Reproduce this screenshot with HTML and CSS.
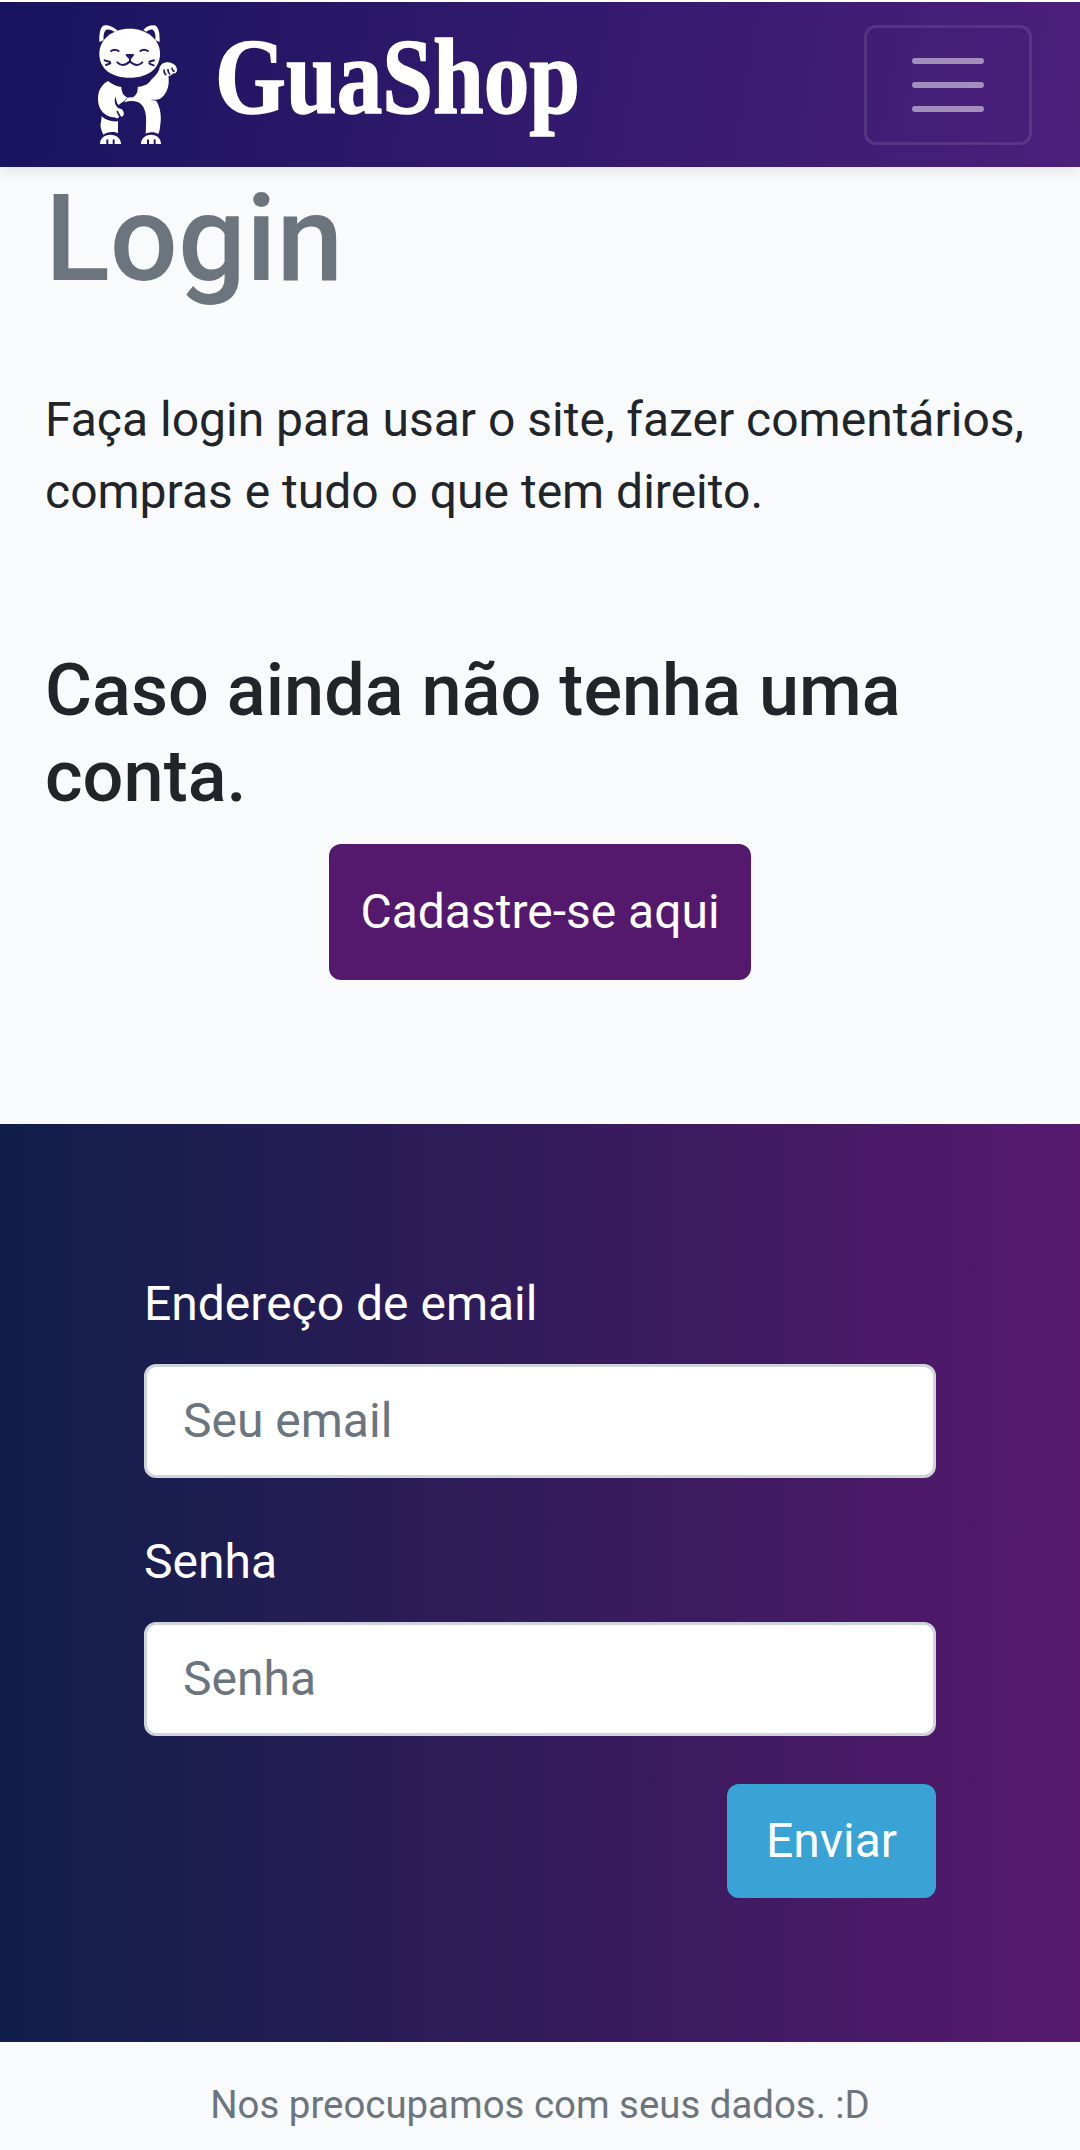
FILE: index.html
```html
<!DOCTYPE html>
<html lang="pt-BR">
<head>
<meta charset="utf-8">
<title>GuaShop - Login</title>
<link rel="stylesheet" href="styles.css">
</head>
<body>
<header class="navbar">
  <a class="brand">
    <svg class="cat" viewBox="0 0 360 435" aria-hidden="true">
      <g fill="#fff">
        <path d="M58 96C57 68 62 46 76 46C91 46 104 54 113 62L105 66C93 59 84 57 78 60C71 65 70 79 71 91Z"/>
        <path d="M239 96C240 68 235 46 221 46C207 46 197 52 190 60L199 65C208 59 214 57 219 60C226 65 227 79 226 91Z"/>
        <path d="M149 56C201 56 240 88 240 131C240 178 201 203 149 203C96 203 58 178 58 131C58 88 97 56 149 56Z"/>
        <path d="M84 213C94 222 108 229 124 231C125 247 129 256 141 262L132 274C126 276 121 282 116 285C109 279 109 271 107 260C100 273 107 289 116 295L124 297C132 303 134 311 129 319C124 321 121 319 119 316C116 328 108 326 104 322C83 322 62 308 56 284C50 255 57 228 84 213Z"/>
        <path d="M173 231C196 229 206 221 215 208C226 198 237 184 238 176C241 163 251 157 263 157C279 157 292 168 291 181C290 189 284 192 279 190C276 196 270 197 266 198C265 200 266 203 266 207C268 231 258 256 240 266C231 271 216 268 211 270C217 272 224 270 229 273C241 291 246 322 240 351C239 361 238 367 234 372C225 364 207 366 197 371C199 334 201 307 188 288C180 277 172 275 164 272L158 262C170 255 174 245 173 231Z"/>
        <path d="M141 263Q153 260 165 263L172 275Q153 270 133 277Z"/>
        <path d="M65 319C77 330 94 336 114 334V370C104 364 82 364 70 374C64 361 59 347 63 336Z"/>
        <path d="M60 402C59 386 73 374 91 374C110 374 123 386 123 402Z"/>
        <path d="M183 402C182 386 196 374 213 374C231 374 243 386 243 402Z"/>
      </g>
      <g class="ink">
        <path d="M93 123Q104 115 116 123M181 123Q192 115 204 123M112 157Q129 174 150 154Q170 174 187 157M150 145V157M74 151L90 156M78 165L91 160M208 155L222 151M208 161L221 166M82 391V402M101 391V402M204 391V402M224 391V402"/>
        <path class="claws" d="M252 180Q251 188 257 194M264 179Q264 187 269 192M276 175Q277 181 282 184M112 305L119 318"/>
        <path class="nose" d="M140 135H159L150 146Z"/>
      </g>
    </svg>
    <svg class="wordmark" viewBox="0 0 380 161">
      <text x="1" y="109" textLength="365" lengthAdjust="spacingAndGlyphs">GuaShop</text>
    </svg>
  </a>
  <button class="toggler" aria-label="Menu"><span></span><span></span><span></span></button>
</header>
<main>
  <section class="intro">
    <h1>Login</h1>
    <p>Faça login para usar o site, fazer comentários, compras e tudo o que tem direito.</p>
    <h2>Caso ainda não tenha uma conta.</h2>
    <a class="btn signup">Cadastre-se aqui</a>
  </section>
  <form class="login">
    <label for="email">Endereço de email</label>
    <input id="email" type="email" placeholder="Seu email">
    <label for="senha">Senha</label>
    <input id="senha" type="password" placeholder="Senha">
    <button class="btn send" type="button">Enviar</button>
  </form>
</main>
<footer>Nos preocupamos com seus dados. :D</footer>
</body>
</html>
```
FILE: styles.css
```css
* { box-sizing: border-box; }
body {
  margin: 0;
  padding-top: 2px;
  height: 2150px;
  overflow: hidden;
  background: #f8fafc;
  color: #212529;
  font: 400 48px/72px Roboto, sans-serif;
}
h1, h2, p { margin: 0; }
.navbar {
  display: flex;
  align-items: center;
  justify-content: space-between;
  height: 165px;
  padding: 0 48px 0 80px;
  background: linear-gradient(100deg, #18145f, #4c1f7b);
  box-shadow: 0 -2px #fff, 0 6px 12px rgba(0, 0, 0, .075);
}
.brand { display: flex; align-items: center; }
.cat { width: 120px; height: 145px; margin-bottom: 4px; }
.ink { fill: none; stroke: #211a66; stroke-width: 6; stroke-linecap: round; stroke-linejoin: round; }
.ink .claws { stroke-width: 5; }
.ink .nose { fill: #211a66; }
.wordmark { width: 380px; height: 161px; margin-left: 14px; }
.wordmark text { font: 700 107px "Liberation Serif", serif; fill: #fff; stroke: #fff; stroke-width: 1.5px; }
.toggler {
  display: flex;
  flex-direction: column;
  align-items: center;
  justify-content: center;
  gap: 18px;
  width: 168px;
  height: 120px;
  padding: 0;
  border: 3px solid rgba(255, 255, 255, .1);
  border-radius: 12px;
  background: none;
}
.toggler span { width: 72px; height: 6px; border-radius: 3px; background: rgba(255, 255, 255, .5); }
.intro { display: flex; flex-direction: column; height: 957px; padding: 0 45px; }
h1 { color: #6c757d; font-size: 120px; line-height: 144px; font-weight: 500; }
.intro p { margin: 73px 0 120px; }
h2 { font-size: 72px; line-height: 86.4px; font-weight: 500; letter-spacing: .04px; }
.btn {
  border: 0;
  border-radius: 12px;
  color: #fff;
  font: inherit;
  text-align: center;
}
.signup { align-self: center; width: 422px; height: 136px; margin-top: 23px; line-height: 136px; background: #54196d; }
.login {
  display: flex;
  flex-direction: column;
  height: 918px;
  padding: 144px;
  background: linear-gradient(90deg, #101e4a, #351b5c 53%, #56196e);
  color: #fff;
}
.login label { margin-bottom: 24px; }
.login input {
  height: 114px;
  margin-bottom: 48px;
  padding: 0 36px 2px;
  border: 3px solid #ced4da;
  border-radius: 12px;
  background: #fff;
  color: #495057;
  font: inherit;
}
.login input::placeholder { color: #6c757d; opacity: 1; }
.send { align-self: flex-end; width: 209px; height: 114px; padding: 0; background: #38a3d4; }
footer { padding-top: 33px; color: #6c757d; font-size: 38.4px; line-height: 60px; text-align: center; }
```
